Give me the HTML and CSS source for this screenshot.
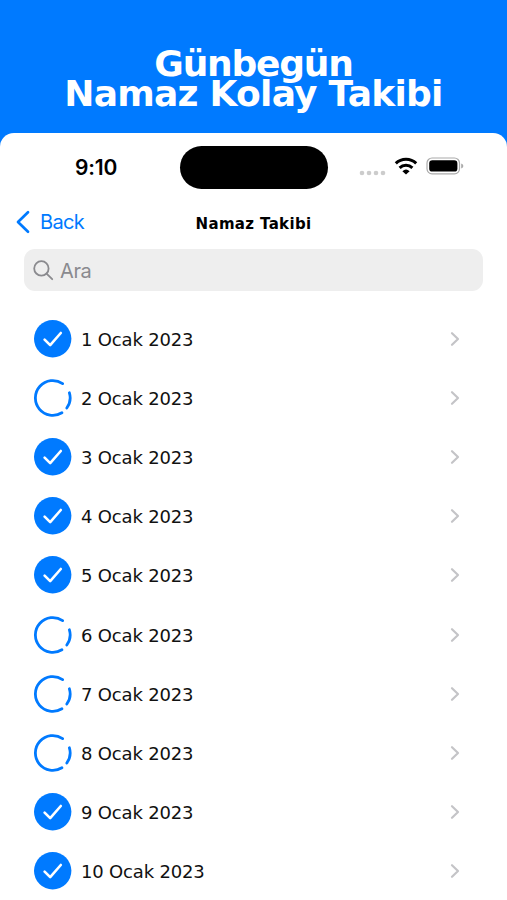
FILE: index.html
```
<!DOCTYPE html>
<html lang="tr">
<head>
    <meta charset="UTF-8">
    <meta name="viewport" content="width=device-width, initial-scale=1.0">
    <title>Namaz Takibi</title>
    <link rel="stylesheet" href="styles.css">
</head>
<body>
    <h1 class="headline"><span class="line-one">Günbegün</span><br>Namaz Kolay Takibi</h1>
    <div class="phone">
        <div class="status-bar">
            <span class="time">9:10</span>
            <div class="island"></div>
            <div class="status-icons">
                <svg class="dots" width="28" height="6" viewBox="0 0 28 6" fill="#ccc">
                    <circle cx="3" cy="3" r="2.3"/>
                    <circle cx="10" cy="3" r="2.3"/>
                    <circle cx="17" cy="3" r="2.3"/>
                    <circle cx="24" cy="3" r="2.3"/>
                </svg>
                <svg class="wifi" width="24" height="18" viewBox="0 0 24 18" fill="none" stroke="#000" stroke-width="3">
                    <path d="M1.8 6.4A14.6 14.6 0 0 1 22.2 6.4"/>
                    <path d="M5.6 10.9A9.2 9.2 0 0 1 18.4 10.9"/>
                    <path d="M12 17.4L8.4 14.2A5.4 5.4 0 0 1 15.6 14.2Z" fill="#000" stroke="none"/>
                </svg>
                <svg class="battery" width="38" height="18" viewBox="0 0 38 18">
                    <rect x="1" y="1" width="32.5" height="15.8" rx="5" fill="#fff" stroke="#aaa" stroke-width="1.2"/>
                    <rect x="3.2" y="3.2" width="28.2" height="11.4" rx="3.2"/>
                    <path d="M35.2 6.6Q37.4 7.4 37.4 9T35.2 11.4Z" fill="#aaa"/>
                </svg>
            </div>
        </div>
        <div class="nav-bar">
            <div class="back">
                <svg width="14" height="24" viewBox="0 0 14 24" fill="none" stroke="#007aff" stroke-width="2.7" stroke-linecap="round" stroke-linejoin="round">
                    <path d="M12 2.3L2 12L12 21.7"/>
                </svg>
                <span>Back</span>
            </div>
            <div class="nav-title">Namaz Takibi</div>
        </div>
        <div class="search">
            <svg width="21" height="21" viewBox="0 0 21 21" fill="none" stroke="#8a8a8e" stroke-width="1.8" stroke-linecap="round">
                <circle cx="8.4" cy="8.4" r="7.2"/>
                <path d="M13.8 13.8L19.2 19.2"/>
            </svg>
            <span>Ara</span>
        </div>
        <div class="list" id="list"></div>
    </div>

    <script>
        const list = document.getElementById('list');
        const days = [true, false, true, true, true, false, false, false, true, true];

        const doneIcon = `<svg class="mark" viewBox="0 0 38 38" fill="none" stroke-linecap="round" stroke-linejoin="round">
            <circle cx="18.7" cy="18.8" r="18.7" fill="#007aff"/>
            <path d="M10.6 19.6L16.2 25.2L26.8 13" stroke="#fff" stroke-width="2.6"/>
        </svg>`;

        const openIcon = `<svg class="mark" viewBox="0 0 38 38" fill="none" stroke="#007aff" stroke-width="2.8" stroke-linecap="round">
            <path d="M28.6 4.6A17.4 17.4 0 1 0 27.9 33.8"/>
            <path d="M35.4 13.8A17.4 17.4 0 0 1 32.8 29"/>
        </svg>`;

        const chevron = `<svg class="chevron" width="10" height="16" viewBox="0 0 10 16" fill="none" stroke="#c4c4c7" stroke-width="2.2" stroke-linecap="round" stroke-linejoin="round">
            <path d="M2 2.2L8 8L2 13.8"/>
        </svg>`;

        days.forEach((done, i) => {
            const row = document.createElement('div');
            row.className = 'row';
            row.innerHTML = `${done ? doneIcon : openIcon}<span class="day">${i + 1} Ocak 2023</span>${chevron}`;
            list.appendChild(row);
        });
    </script>
</body>
</html>
```
FILE: styles.css
```
* {
    box-sizing: border-box;
}
body {
    margin: 0;
    width: 507px;
    height: 900px;
    overflow: hidden;
    background: #007aff;
    font-family: "DejaVu Sans", Verdana, sans-serif;
}
svg {
    display: block;
    flex-shrink: 0;
}
.headline {
    margin: 0;
    height: 133px;
    padding-top: 49px;
    color: #fff;
    font-size: 36px;
    line-height: 30px;
    letter-spacing: -0.75px;
    text-align: center;
    white-space: nowrap;
}
.line-one {
    letter-spacing: -1.2px;
}
.phone {
    height: 767px;
    background: #fff;
    border-radius: 14px 14px 0 0;
    overflow: hidden;
}
.status-bar {
    display: grid;
    grid-template-columns: 180px 148px 1fr;
    height: 69px;
    padding-top: 13px;
}
.time {
    padding-left: 75px;
    font: 600 21px/43px Inter, sans-serif;
    letter-spacing: -0.2px;
}
.island {
    height: 43px;
    background: #000;
    border-radius: 22px;
}
.status-icons {
    display: flex;
    align-items: flex-start;
    padding: 11px 0 0 31px;
}
.dots {
    margin-top: 13px;
}
.wifi {
    margin-left: 7px;
}
.battery {
    margin-left: 8px;
}
.nav-bar {
    display: grid;
    grid-template-columns: 1fr auto 1fr;
    align-items: center;
    height: 40px;
    padding: 0 16px;
}
.back {
    display: flex;
    align-items: center;
    gap: 10px;
    color: #007aff;
    font: 20px/24px Inter, sans-serif;
    letter-spacing: -0.7px;
}
.nav-title {
    padding-top: 3px;
    font-size: 15px;
    font-weight: bold;
    letter-spacing: 0.35px;
}
.search {
    display: flex;
    align-items: center;
    gap: 5px;
    height: 42px;
    margin: 7px 24px 0;
    padding-left: 9px;
    background: #eee;
    border-radius: 11px;
    color: #8a8a8e;
    font: 20px/24px Inter, sans-serif;
    letter-spacing: -0.4px;
}
.search span {
    padding: 1px 0 0 1px;
}
.list {
    margin-top: 18px;
}
.row {
    display: flex;
    align-items: center;
    height: 59.2px;
    padding: 0 47px 0 34px;
}
.mark {
    width: 38px;
    height: 38px;
}
.day {
    flex: 1;
    margin-left: 9px;
    padding-top: 1px;
    color: #111;
    font-size: 18px;
    letter-spacing: -0.17px;
}
```
